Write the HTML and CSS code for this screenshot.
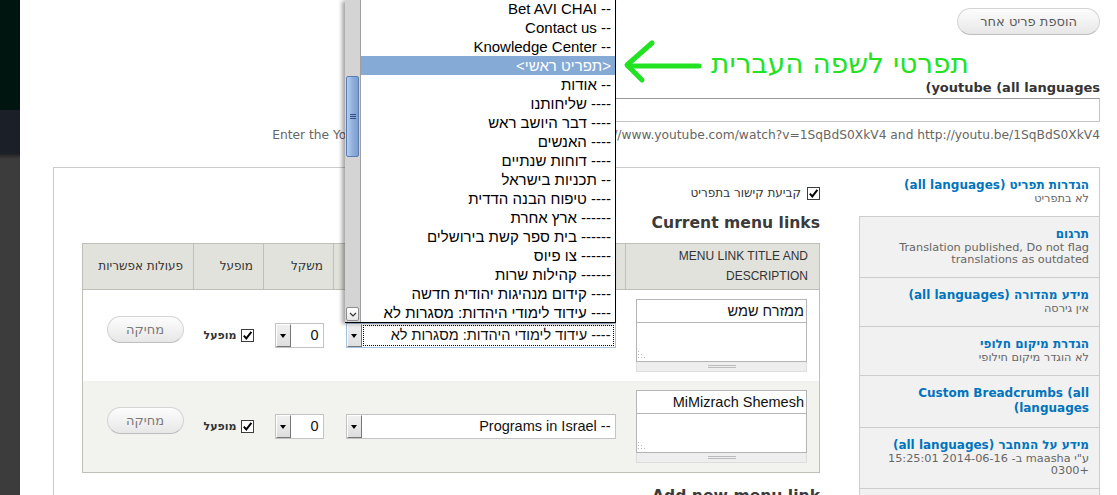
FILE: index.html
```html
<!DOCTYPE html>
<html lang="he">
<head>
<meta charset="utf-8">
<title>Menu settings</title>
<link rel="stylesheet" href="styles.css">
</head>
<body>
<div class="app">
  <aside class="rail">
    <div class="rail-top"></div>
    <div class="rail-mid"></div>
    <div class="rail-bot"></div>
  </aside>
  <main class="content" dir="rtl">
    <div class="top-actions"><button class="btn btn-add" type="button">הוספת פריט אחר</button></div>
    <div class="field">
      <label class="field-label">youtube (all languages<span dir="rtl">)</span></label>
      <div class="text-input wide"></div>
      <div class="description">Enter the YouTube URL. Valid URL formats include: http://www.youtube.com/watch?v=1SqBdS0XkV4 and http://youtu.be/1SqBdS0XkV4</div>
    </div>
    <div class="vtabs">
      <ul class="tab-list">
        <li class="tab selected"><strong class="tab-title">הגדרות תפריט (all languages)</strong><span class="summary">לא בתפריט</span></li>
        <li class="tab"><strong class="tab-title">תרגום</strong><span class="summary">Translation published, Do not flag translations as outdated</span></li>
        <li class="tab"><strong class="tab-title">מידע מהדורה (all languages)</strong><span class="summary">אין גירסה</span></li>
        <li class="tab"><strong class="tab-title">הגדרת מיקום חלופי</strong><span class="summary">לא הוגדר מיקום חילופי</span></li>
        <li class="tab"><strong class="tab-title">Custom Breadcrumbs (all languages<span dir="rtl">)</span></strong></li>
        <li class="tab"><strong class="tab-title">מידע על המחבר (all languages)</strong><span class="summary">ע"י maasha ב- 2014-06-16 15:25:01 +0300</span></li>
        <li class="tab"><strong class="tab-title">הגדרות נתיב URL</strong><span class="summary">ללא כינוי</span></li>
      </ul>
      <div class="pane">
        <label class="check-row"><span class="cb"><svg viewBox="0 0 11 11" width="11" height="11"><path d="M1.8 5.6 L4.3 8.4 L9.4 1.8" fill="none" stroke="#000" stroke-width="1.9"/></svg></span>קביעת קישור בתפריט</label>
        <h2 class="section-title">Current menu links</h2>
        <table class="links">
          <colgroup><col class="c-title"><col class="c-parent"><col class="c-weight"><col class="c-enabled"><col class="c-ops"></colgroup>
          <thead>
            <tr>
              <th class="th-en">Menu link title and description</th>
              <th>פריט הורה</th>
              <th>משקל</th>
              <th>מופעל</th>
              <th>פעולות אפשריות</th>
            </tr>
          </thead>
          <tbody>
            <tr class="odd">
              <td class="td-title">
                <div class="title-widget">
                  <div class="ti-input">ממזרח שמש</div>
                  <div class="ti-area"><svg class="resize-dots" viewBox="0 0 9 9" width="9" height="9"><g fill="#b9b9b9"><rect x="0" y="0" width="1" height="1"/><rect x="0" y="3" width="1" height="1"/><rect x="3" y="3" width="1" height="1"/><rect x="0" y="6" width="1" height="1"/><rect x="3" y="6" width="1" height="1"/><rect x="6" y="6" width="1" height="1"/></g></svg></div>
                  <div class="grippie"><span class="grip-lines"></span></div>
                </div>
              </td>
              <td><div class="select sel-parent focused"><span class="sel-btn"></span><span class="sel-val">---- עידוד לימודי היהדות: מסגרות לא</span></div></td>
              <td><div class="select sel-weight"><span class="sel-btn"></span><span class="sel-val">0</span></div></td>
              <td><label class="opt"><span class="cb"><svg viewBox="0 0 11 11" width="11" height="11"><path d="M1.8 5.6 L4.3 8.4 L9.4 1.8" fill="none" stroke="#000" stroke-width="1.9"/></svg></span>מופעל</label></td>
              <td><button class="btn btn-del" type="button">מחיקה</button></td>
            </tr>
            <tr class="even">
              <td class="td-title">
                <div class="title-widget">
                  <div class="ti-input">MiMizrach Shemesh</div>
                  <div class="ti-area"><svg class="resize-dots" viewBox="0 0 9 9" width="9" height="9"><g fill="#b9b9b9"><rect x="0" y="0" width="1" height="1"/><rect x="0" y="3" width="1" height="1"/><rect x="3" y="3" width="1" height="1"/><rect x="0" y="6" width="1" height="1"/><rect x="3" y="6" width="1" height="1"/><rect x="6" y="6" width="1" height="1"/></g></svg></div>
                  <div class="grippie"><span class="grip-lines"></span></div>
                </div>
              </td>
              <td><div class="select sel-parent"><span class="sel-btn"></span><span class="sel-val">-- Programs in Israel</span></div></td>
              <td><div class="select sel-weight"><span class="sel-btn"></span><span class="sel-val">0</span></div></td>
              <td><label class="opt"><span class="cb"><svg viewBox="0 0 11 11" width="11" height="11"><path d="M1.8 5.6 L4.3 8.4 L9.4 1.8" fill="none" stroke="#000" stroke-width="1.9"/></svg></span>מופעל</label></td>
              <td><button class="btn btn-del" type="button">מחיקה</button></td>
            </tr>
          </tbody>
        </table>
        <h2 class="section-title">Add new menu link</h2>
      </div>
    </div>
  </main>
</div>

<div class="select-popup">
  <div class="popup-scroll">
    <div class="sb-thumb"><span class="grip"></span></div>
    <div class="sb-down"><svg viewBox="0 0 8 5" width="8" height="5"><path d="M1 1 L4 4 L7 1" fill="none" stroke="#333" stroke-width="1.2"/></svg></div>
  </div>
  <ul class="popup-list">
    <li>-- Bet AVI CHAI</li>
    <li>-- Contact us</li>
    <li>-- Knowledge Center</li>
    <li class="hl">&lt;תפריט ראשי&gt;</li>
    <li>-- אודות</li>
    <li>---- שליחותנו</li>
    <li>---- דבר היושב ראש</li>
    <li>---- האנשים</li>
    <li>---- דוחות שנתיים</li>
    <li>-- תכניות בישראל</li>
    <li>---- טיפוח הבנה הדדית</li>
    <li>------ ארץ אחרת</li>
    <li>------ בית ספר קשת בירושלים</li>
    <li>------ צו פיוס</li>
    <li>------ קהילות שרות</li>
    <li>---- קידום מנהיגות יהודית חדשה</li>
    <li>---- עידוד לימודי היהדות: מסגרות לא</li>
  </ul>
</div>

<svg class="annot-arrow" viewBox="0 0 90 50" width="90" height="50">
  <g fill="none" stroke="#22e322" stroke-width="5" stroke-linecap="round" stroke-linejoin="round">
    <path d="M9 31 L80 31"/>
    <path d="M33 8 L8 30 L23 45"/>
  </g>
</svg>
<div class="annot-text">תפרטי לשפה העברית</div>
</body>
</html>
```

FILE: styles.css
```css
* { box-sizing: border-box; }
html, body { margin: 0; padding: 0; }
body {
  width: 1117px;
  height: 495px;
  overflow: hidden;
  position: relative;
  background: #fff;
  font-family: "DejaVu Sans", sans-serif;
  font-size: 13px;
  color: #333;
}

.app { display: flex; height: 495px; }

.rail { flex: 0 0 20px; display: flex; flex-direction: column; }
.rail-top { height: 110px; background: #00150f; }
.rail-mid { height: 44px; background: #1b1f27; }
.rail-bot { flex: 1; background: linear-gradient(#222 0, #3c3c3c 5px); }

.content { flex: 1; min-width: 0; padding: 8px 17px 0 33px; }

.top-actions { display: flex; height: 27px; }

.btn {
  font-family: "DejaVu Sans", sans-serif;
  font-size: 13px;
  height: 27px;
  line-height: 25px;
  padding: 0 22px;
  border: 1px solid #d4d4d4;
  border-bottom-color: #bdbdbd;
  border-radius: 14px;
  background: linear-gradient(#fdfdfd, #e7e7e7);
  color: #5a5a5a;
}

.field-label {
  display: block;
  margin-top: 45px;
  font-weight: bold;
  font-size: 13px;
  line-height: 16px;
  color: #333;
}
.text-input.wide {
  width: 700px;
  height: 24px;
  margin-top: 2px;
  border: 1px solid #c4c4c4;
  border-top-color: #999;
  background: #fff;
}
.description {
  margin-top: 5px;
  font-size: 12.25px;
  line-height: 16px;
  color: #666;
  white-space: nowrap;
}

.vtabs {
  display: flex;
  margin-top: 24px;
  height: 340px;
  border: 1px solid #ccc;
  border-bottom: 0;
}
.tab-list {
  list-style: none;
  margin: 0;
  padding: 0;
  width: 240px;
  flex: none;
  background: #f1f1f1;
  border-left: 1px solid #ccc;
}
.tab {
  padding: 10px 10px 11px;
  border-bottom: 1px solid #ccc;
  background: #f1f1f1;
}
.tab.selected {
  background: #fff;
  margin-left: -1px;
  padding-left: 11px;
}
.tab-title {
  display: block;
  font-size: 12px;
  line-height: 15px;
  font-weight: bold;
  color: #0074bd;
}
.summary {
  display: block;
  font-size: 11.3px;
  line-height: 12px;
  color: #666;
}

.pane {
  flex: 1;
  min-width: 0;
  padding: 18px 39px 0 28px;
  background: #fff;
}

.check-row {
  display: flex;
  align-items: center;
  gap: 6px;
  height: 14px;
  font-size: 12px;
  color: #333;
}
.cb {
  width: 13px;
  height: 13px;
  flex: none;
  border: 1px solid #3d3d3d;
  background: #fff;
  display: inline-flex;
  align-items: center;
  justify-content: center;
}

.section-title {
  margin: 13px 0 10px;
  font-size: 15.6px;
  line-height: 20px;
  font-weight: bold;
  color: #3b3b3b;
}

.links {
  width: 737px;
  border-collapse: collapse;
  table-layout: fixed;
  border: 1px solid #bebfb9;
}
.c-title { width: 194px; }
.c-parent { width: 292px; }
.c-weight { width: 70px; }
.c-enabled { width: 70px; }
.c-ops { width: 111px; }

.links th {
  background: #e1e2dc;
  border: 1px solid #bebfb9;
  padding: 2px 10px 3px;
  line-height: 20px;
  font-weight: normal;
  font-size: 12px;
  text-align: right;
  color: #333;
}
.links th.th-en {
  font-family: "Liberation Sans", sans-serif;
  text-transform: uppercase;
  padding-right: 11px;
}
.links td {
  padding: 9px 10px;
  vertical-align: middle;
}
.links tr.even td { background: #f2f2ee; }
.links td.td-title { padding-right: 12px; }

.title-widget { width: 171px; }
.ti-input {
  height: 24px;
  border: 1px solid #b5b5b5;
  background: #fff;
  padding: 0 2px;
  font: 14.5px/22px "Liberation Sans", sans-serif;
  color: #111;
  text-align: right;
  white-space: nowrap;
}
.ti-area {
  height: 40px;
  margin-top: -1px;
  border: 1px solid #b5b5b5;
  background: #fff;
  display: flex;
  align-items: flex-end;
  justify-content: flex-end;
  padding: 0 0 1px 1px;
}
.resize-dots { display: block; }
.grippie {
  height: 10px;
  border: 1px solid #ddd;
  border-top: 0;
  background: #eee;
  display: flex;
  align-items: center;
  justify-content: center;
}
.grip-lines {
  width: 28px;
  height: 3px;
  border-top: 1px solid #bbb;
  border-bottom: 1px solid #bbb;
}

.select {
  display: flex;
  direction: ltr;
  height: 25px;
  border: 1px solid #c3c3c3;
  background: #fff;
}
.sel-parent { width: 270px; }
.sel-weight { width: 49px; }
.select.focused { border-color: #a9c0de; }
.sel-btn {
  width: 15px;
  flex: none;
  background: linear-gradient(#f0f0f0, #dedede);
  border-top: 1px solid #fff;
  border-left: 1px solid #fff;
  border-right: 1px solid #777;
  border-bottom: 1px solid #777;
  display: flex;
  align-items: center;
  justify-content: center;
}
.sel-btn::before {
  content: "";
  border-left: 3px solid transparent;
  border-right: 3px solid transparent;
  border-top: 4px solid #000;
}
.sel-val {
  flex: 1;
  min-width: 0;
  direction: rtl;
  text-align: right;
  padding: 0 4px;
  font: 14.5px/23px "Liberation Sans", sans-serif;
  color: #111;
  white-space: nowrap;
  overflow: hidden;
}
.select.focused .sel-val {
  outline: 1px dotted #000;
  outline-offset: -2px;
}

.opt {
  display: flex;
  align-items: center;
  gap: 4px;
  font-size: 11px;
  font-weight: bold;
  color: #333;
}

.btn-del {
  display: block;
  width: 77px;
  padding: 0;
  margin-bottom: 12px;
  color: #7a7a7a;
}

/* open dropdown list overlay */
.select-popup {
  position: absolute;
  left: 345px;
  top: 0;
  width: 271px;
  height: 323px;
  display: flex;
  background: #fff;
  border-right: 1px solid #000;
  border-bottom: 1px solid #000;
  box-shadow: -3px 1px 4px rgba(0, 0, 0, 0.35);
  overflow: hidden;
}
.popup-scroll {
  width: 16px;
  flex: none;
  display: flex;
  flex-direction: column;
  background: #d4d4d4;
  border-right: 1px solid #a0a0a0;
}
.sb-thumb {
  margin: 76px 1px 0;
  height: 81px;
  border: 1px solid #5a7cb4;
  border-radius: 2px;
  background: linear-gradient(to right, #b5cdee, #8eaedb 55%, #7c9ed1);
  display: flex;
  align-items: center;
  justify-content: center;
}
.grip {
  width: 6px;
  height: 5px;
  background: repeating-linear-gradient(#2f4f86 0 1px, transparent 1px 2px);
}
.sb-down {
  margin: auto 1px 1px;
  height: 14px;
  border: 1px solid #8d8d8d;
  border-radius: 2px;
  background: linear-gradient(#fff, #e6e6e6);
  display: flex;
  align-items: center;
  justify-content: center;
}
.popup-list {
  flex: 1;
  min-width: 0;
  direction: rtl;
  list-style: none;
  margin: -1px 0 0;
  padding: 0;
  font: 15px "Liberation Sans", sans-serif;
  color: #000;
}
.popup-list li {
  height: 19px;
  line-height: 19px;
  padding: 0 4px;
  text-align: right;
  white-space: nowrap;
  overflow: hidden;
}
.popup-list li.hl { background: #86aad6; color: #fff; }

/* green annotation */
.annot-arrow {
  position: absolute;
  left: 619px;
  top: 35px;
}
.annot-text {
  position: absolute;
  left: 690px;
  top: 47px;
  width: 279px;
  direction: rtl;
  text-align: right;
  font: 28px/34px "DejaVu Sans", sans-serif;
  color: #22e322;
  white-space: nowrap;
}
```
